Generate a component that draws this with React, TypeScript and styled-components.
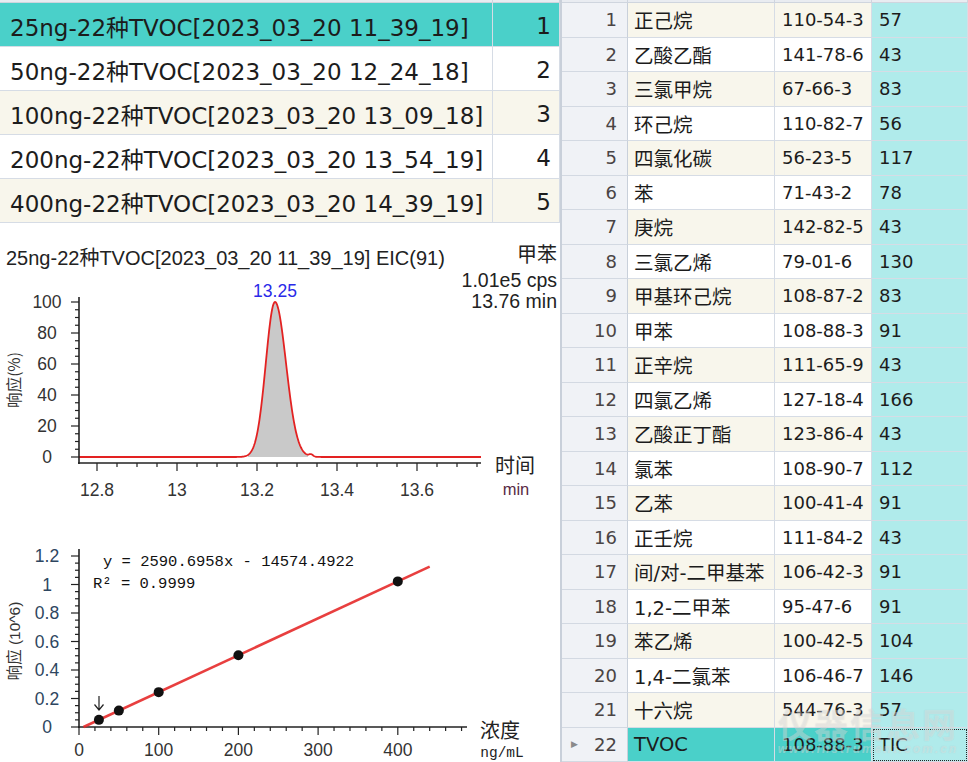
import React from "react";
import styled, { createGlobalStyle } from "styled-components";

const GlobalStyle = createGlobalStyle`
  html, body { margin: 0; padding: 0; background: #ffffff; }
  body { width: 968px; height: 762px; overflow: hidden; font-family: "DejaVu Sans", "Noto Sans CJK SC", sans-serif; }
`;

const TEAL = "#4ad0c9";
const CREAM = "#f8f6ec";
const CYAN = "#b0ebeb";
const GRID = "#d6dce5";

const Page = styled.div`
  display: grid;
  grid-template-columns: 560px 2px 406px;
  width: 968px;
  height: 762px;
  overflow: hidden;
`;

const LeftPane = styled.div`
  display: flex;
  flex-direction: column;
  background: #fff;
`;

const Divider = styled.div`
  background: #c9d0da;
`;

const HeaderStrip = styled.div<{ $cols: string }>`
  display: grid;
  grid-template-columns: ${(p) => p.$cols};
  height: 3px;
  background: #e9ecf1;
  border-bottom: 1px solid #cfd5de;
  box-sizing: border-box;
  & > div { border-right: 1px solid #cfd5de; }
`;

const SampleRow = styled.div<{ $bg: string }>`
  display: grid;
  grid-template-columns: 493px 67px;
  height: 44px;
  background: ${(p) => p.$bg};
  font-family: "DejaVu Sans", "Noto Sans CJK SC", sans-serif;
  font-size: 23px;
  color: #1c1c1c;
`;

const SampleCell = styled.div<{ $align?: string }>`
  display: flex;
  align-items: center;
  justify-content: ${(p) => (p.$align === "right" ? "flex-end" : "flex-start")};
  padding: 2px ${(p) => (p.$align === "right" ? "8px" : "0")} 0 ${(p) => (p.$align === "right" ? "0" : "10px")};
  border-right: 1px solid ${GRID};
  border-bottom: 1px solid ${GRID};
  white-space: nowrap;
  overflow: hidden;
`;

const ChartSvg = styled.svg`
  display: block;
  font-family: "Liberation Sans", "Noto Sans CJK SC", sans-serif;
`;

const RightPane = styled.div`
  position: relative;
  display: flex;
  flex-direction: column;
  background: #fff;
`;

const CompoundRow = styled.div`
  display: grid;
  grid-template-columns: 66px 147px 97px 96px;
  height: 34.5px;
  font-family: "DejaVu Sans", "Noto Sans CJK SC", sans-serif;
  font-size: 18px;
  color: #1c1c1c;
`;

const IndexCell = styled.div`
  position: relative;
  display: flex;
  align-items: center;
  justify-content: flex-end;
  padding-right: 10px;
  background: #f0f2f6;
  color: #4a4444;
  border-right: 1px solid #c9d0da;
  border-bottom: 1px solid #d3d9e2;
`;

const Pointer = styled.span`
  position: absolute;
  left: 9px;
  top: 50%;
  transform: translateY(-50%);
  font-size: 9px;
  color: #8a8a8a;
`;

const DataCell = styled.div<{ $bg: string; $focus?: boolean; $cjk?: boolean }>`
  display: flex;
  align-items: center;
  padding-left: ${(p) => (p.$cjk ? "6px" : "7px")};
  background: ${(p) => p.$bg};
  font-size: ${(p) => (p.$cjk ? "19.5px" : "18px")};
  border-right: 1px solid ${GRID};
  border-bottom: 1px solid ${GRID};
  white-space: nowrap;
  overflow: hidden;
  box-sizing: border-box;
  outline: ${(p) => (p.$focus ? "1px dotted #222" : "none")};
  outline-offset: -2px;
`;

const Watermark = styled.div`
  position: absolute;
  right: 10px;
  bottom: 6px;
  display: flex;
  flex-direction: column;
  align-items: flex-end;
  pointer-events: none;
  color: rgba(255, 255, 255, 0.3);
  text-shadow: 0 0 1px rgba(140, 140, 140, 0.25);
`;

const WatermarkBig = styled.span`
  font-family: "Noto Sans CJK SC", sans-serif;
  font-size: 34px;
  font-weight: 700;
  letter-spacing: 2px;
  line-height: 36px;
`;

const WatermarkSmall = styled.span`
  font-family: "Liberation Sans", sans-serif;
  font-size: 12px;
  font-style: italic;
  font-weight: 700;
  letter-spacing: 2px;
`;

const samples = [
  ["25ng-22种TVOC[2023_03_20 11_39_19]", "1"],
  ["50ng-22种TVOC[2023_03_20 12_24_18]", "2"],
  ["100ng-22种TVOC[2023_03_20 13_09_18]", "3"],
  ["200ng-22种TVOC[2023_03_20 13_54_19]", "4"],
  ["400ng-22种TVOC[2023_03_20 14_39_19]", "5"],
];

const compounds = [
  ["正己烷", "110-54-3", "57"],
  ["乙酸乙酯", "141-78-6", "43"],
  ["三氯甲烷", "67-66-3", "83"],
  ["环己烷", "110-82-7", "56"],
  ["四氯化碳", "56-23-5", "117"],
  ["苯", "71-43-2", "78"],
  ["庚烷", "142-82-5", "43"],
  ["三氯乙烯", "79-01-6", "130"],
  ["甲基环己烷", "108-87-2", "83"],
  ["甲苯", "108-88-3", "91"],
  ["正辛烷", "111-65-9", "43"],
  ["四氯乙烯", "127-18-4", "166"],
  ["乙酸正丁酯", "123-86-4", "43"],
  ["氯苯", "108-90-7", "112"],
  ["乙苯", "100-41-4", "91"],
  ["正壬烷", "111-84-2", "43"],
  ["间/对-二甲基苯", "106-42-3", "91"],
  ["1,2-二甲苯", "95-47-6", "91"],
  ["苯乙烯", "100-42-5", "104"],
  ["1,4-二氯苯", "106-46-7", "146"],
  ["十六烷", "544-76-3", "57"],
  ["TVOC", "108-88-3", "TIC"],
];

/* ---------- Chromatogram ---------- */
const tx = (t: number) => 97 + (t - 12.8) * 400;
const py = (p: number) => 457 - p * 1.55;

function peakPct(x: number) {
  const dx = x - 275;
  const s = dx < 0 ? 9.2 : 11;
  let p = 100 * Math.exp(-(dx * dx) / (2 * s * s));
  p += 1.4 * Math.exp(-((x - 311) ** 2) / 8);
  return p;
}

function buildPeak() {
  const pts: string[] = [];
  for (let x = 79; x <= 481; x += 0.5) {
    pts.push(`${x.toFixed(1)},${py(peakPct(x)).toFixed(2)}`);
  }
  const line = "M" + pts.join(" L");
  const fillPts: string[] = [];
  for (let x = 248; x <= 308; x += 0.5) {
    fillPts.push(`${x.toFixed(1)},${py(peakPct(x)).toFixed(2)}`);
  }
  const fill = `M248,457 L${fillPts.join(" L")} L308,457 Z`;
  return { line, fill };
}

const Chromatogram: React.FC = () => {
  const { line, fill } = buildPeak();
  const yTicks: number[] = [];
  for (let v = 0; v <= 100; v += 5) yTicks.push(v);
  const xTicks: number[] = [];
  for (let i = 0; i <= 19; i++) xTicks.push(12.8 + i * 0.05);
  return (
    <ChartSvg width={560} height={282} viewBox="0 223 560 282">
      <text x={6} y={265} fontSize={20} fill="#222">25ng-22种TVOC[2023_03_20 11_39_19] EIC(91)</text>
      <text x={557} y={262} fontSize={20} textAnchor="end" fill="#222" fontFamily="'Noto Sans CJK SC', sans-serif">甲苯</text>
      <text x={557} y={287} fontSize={19.5} textAnchor="end" fill="#222">1.01e5 cps</text>
      <text x={557} y={308} fontSize={19.5} textAnchor="end" fill="#222">13.76 min</text>
      <text x={275} y={297} fontSize={17.5} textAnchor="middle" fill="#2a2ae8">13.25</text>

      <path d={fill} fill="#c9c9c9" />
      <path d={line} fill="none" stroke="#e32222" strokeWidth={1.8} />

      <line x1={79} y1={297} x2={79} y2={464} stroke="#222" strokeWidth={1.6} />
      <line x1={78} y1={463} x2={481} y2={463} stroke="#222" strokeWidth={1.6} />
      {yTicks.map((v) => (
        <line key={"y" + v} x1={v % 20 === 0 ? 71 : 75} x2={79} y1={py(v)} y2={py(v)} stroke="#222" strokeWidth={1.2} />
      ))}
      {[0, 20, 40, 60, 80, 100].map((v) => (
        <text key={"yl" + v} x={47} y={py(v) + 6} fontSize={17.5} textAnchor="middle" fill="#333">{v}</text>
      ))}
      {xTicks.map((t, i) => (
        <line key={"x" + i} x1={tx(t)} x2={tx(t)} y1={463} y2={i % 4 === 0 ? 471 : 467} stroke="#222" strokeWidth={1.2} />
      ))}
      {[["12.8", 12.8], ["13", 13], ["13.2", 13.2], ["13.4", 13.4], ["13.6", 13.6]].map(([l, t]) => (
        <text key={"xl" + l} x={tx(t as number)} y={496} fontSize={17.5} textAnchor="middle" fill="#333">{l}</text>
      ))}
      <text x={515} y={473} fontSize={20} textAnchor="middle" fill="#222" fontFamily="'Noto Sans CJK SC', sans-serif">时间</text>
      <text x={516} y={495} fontSize={16.5} textAnchor="middle" fill="#5a2a44">min</text>
      <text transform="translate(20 380) rotate(-90)" fontSize={15.5} textAnchor="middle" fill="#333" fontFamily="'Noto Sans CJK SC', sans-serif">响应(%)</text>
    </ChartSvg>
  );
};

/* ---------- Calibration curve ---------- */
const cx = (c: number) => 79 + c * 0.797;
const vy = (v: number) => 727 - v * 142.5;
const resp = (c: number) => (2590.6958 * c - 14574.4922) / 1e6;

const Calibration: React.FC = () => {
  const yTicks: number[] = [];
  for (let i = 0; i <= 24; i++) yTicks.push(i * 0.05);
  const xTicks: number[] = [];
  for (let c = 0; c <= 480; c += 20) xTicks.push(c);
  const c0 = 14574.4922 / 2590.6958;
  return (
    <ChartSvg width={560} height={257} viewBox="0 505 560 257">
      <line x1={79} y1={549} x2={79} y2={728} stroke="#222" strokeWidth={1.6} />
      <line x1={78} y1={727} x2={467} y2={727} stroke="#222" strokeWidth={1.6} />
      {yTicks.map((v, i) => (
        <line key={"y" + i} x1={i % 4 === 0 ? 71 : 75} x2={79} y1={vy(v)} y2={vy(v)} stroke="#222" strokeWidth={1.2} />
      ))}
      {["0", "0.2", "0.4", "0.6", "0.8", "1", "1.2"].map((l, i) => (
        <text key={"yl" + l} x={47} y={vy(i * 0.2) + 6} fontSize={17.5} textAnchor="middle" fill="#2e4660">{l}</text>
      ))}
      {xTicks.map((c) => (
        <line key={"x" + c} x1={cx(c)} x2={cx(c)} y1={727} y2={c % 100 === 0 ? 735 : 731} stroke="#222" strokeWidth={1.2} />
      ))}
      {[0, 100, 200, 300, 400].map((c) => (
        <text key={"xl" + c} x={cx(c)} y={756} fontSize={17.5} textAnchor="middle" fill="#333">{c}</text>
      ))}
      <text x={500} y={738} fontSize={20} textAnchor="middle" fill="#222" fontFamily="'Noto Sans CJK SC', sans-serif">浓度</text>
      <text x={502} y={757} fontSize={14.5} textAnchor="middle" fill="#222" fontFamily="'Liberation Mono', monospace">ng/mL</text>
      <text transform="translate(20 641) rotate(-90)" fontSize={15.5} textAnchor="middle" fill="#333" fontFamily="'Liberation Sans', 'Noto Sans CJK SC', sans-serif">响应 (10^6)</text>

      <text x={103} y={566} fontSize={15.5} fill="#111" fontFamily="'Liberation Mono', monospace" xmlSpace="preserve">y = 2590.6958x - 14574.4922</text>
      <text x={93} y={588} fontSize={15.5} fill="#111" fontFamily="'Liberation Mono', monospace" xmlSpace="preserve">R² = 0.9999</text>

      <line x1={cx(c0)} y1={vy(0)} x2={cx(440)} y2={vy(resp(440))} stroke="#e52a2a" strokeWidth={2.6} strokeOpacity={0.9} />
      {[25, 50, 100, 200, 400].map((c) => (
        <circle key={"p" + c} cx={cx(c)} cy={vy(resp(c))} r={5} fill="#111" />
      ))}
      <path d="M99 696 V710 M94.5 704.5 L99 710 L103.5 704.5" fill="none" stroke="#222" strokeWidth={1.2} />
    </ChartSvg>
  );
};

export default function App() {
  return (
    <>
      <GlobalStyle />
      <Page>
        <LeftPane>
          <HeaderStrip $cols="493px 67px">
            <div />
            <div />
          </HeaderStrip>
          {samples.map(([name, idx], i) => (
            <SampleRow key={idx} $bg={i === 0 ? TEAL : i % 2 === 0 ? CREAM : "#ffffff"}>
              <SampleCell>{name}</SampleCell>
              <SampleCell $align="right">{idx}</SampleCell>
            </SampleRow>
          ))}
          <Chromatogram />
          <Calibration />
        </LeftPane>
        <Divider />
        <RightPane>
          <HeaderStrip $cols="66px 147px 97px 96px">
            <div />
            <div />
            <div />
            <div />
          </HeaderStrip>
          {compounds.map(([name, cas, mz], i) => {
            const last = i === compounds.length - 1;
            const base = i % 2 === 0 ? CREAM : "#ffffff";
            return (
              <CompoundRow key={i}>
                <IndexCell>
                  {last && <Pointer>▶</Pointer>}
                  {i + 1}
                </IndexCell>
                <DataCell $bg={last ? TEAL : base} $cjk>{name}</DataCell>
                <DataCell $bg={last ? TEAL : base}>{cas}</DataCell>
                <DataCell $bg={CYAN} $focus={last}>{mz}</DataCell>
              </CompoundRow>
            );
          })}
          <Watermark>
            <WatermarkBig>仪器信息网</WatermarkBig>
            <WatermarkSmall>www.instrument.com.cn</WatermarkSmall>
          </Watermark>
        </RightPane>
      </Page>
    </>
  );
}
